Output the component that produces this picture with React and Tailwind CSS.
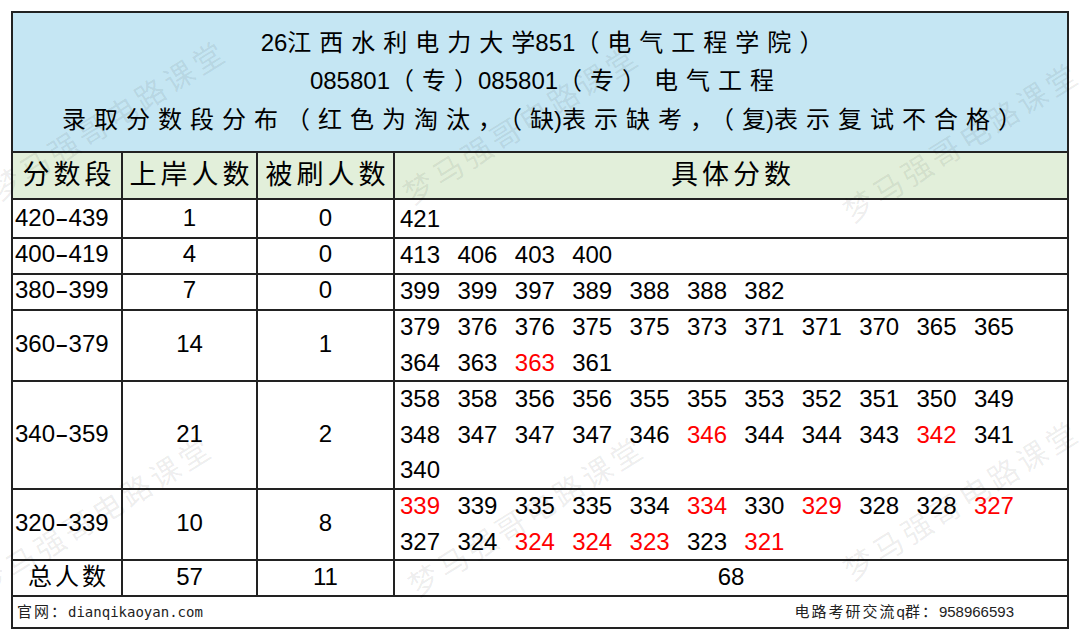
import React from "react";

const rows = [
  { range: ["420", "439"], a: "1", b: "0", h: "h-[36px]", lines: [["421"]] },
  { range: ["400", "419"], a: "4", b: "0", h: "h-[36px]", lines: [["413", "406", "403", "400"]] },
  { range: ["380", "399"], a: "7", b: "0", h: "h-[36px]", lines: [["399", "399", "397", "389", "388", "388", "382"]] },
  {
    range: ["360", "379"], a: "14", b: "1", h: "h-[72px]",
    lines: [
      ["379", "376", "376", "375", "375", "373", "371", "371", "370", "365", "365"],
      ["364", "363", "363*", "361"],
    ],
  },
  {
    range: ["340", "359"], a: "21", b: "2", h: "h-[107px]",
    lines: [
      ["358", "358", "356", "356", "355", "355", "353", "352", "351", "350", "349"],
      ["348", "347", "347", "347", "346", "346*", "344", "344", "343", "342*", "341"],
      ["340"],
    ],
  },
  {
    range: ["320", "339"], a: "10", b: "8", h: "h-[72px]",
    lines: [
      ["339*", "339", "335", "335", "334", "334*", "330", "329*", "328", "328", "327*"],
      ["327", "324", "324*", "324*", "323*", "323", "321*"],
    ],
  },
];

const marks = [
  "left-[2px] top-[176px]",
  "left-[415px] top-[180px]",
  "left-[855px] top-[198px]",
  "left-[-12px] top-[572px]",
  "left-[420px] top-[572px]",
  "left-[855px] top-[556px]",
];

function Range({ lo, hi }) {
  return (
    <span className="whitespace-nowrap">
      {lo}
      <span className="inline-block w-[13.5px] text-center scale-x-[1.7]">-</span>
      {hi}
    </span>
  );
}

function C({ children }) {
  const s = children;
  return (
    <>
      <span className="tracking-[8px]">{s.slice(0, -1)}</span>
      {s.slice(-1)}
    </>
  );
}

export default function App() {
  return (
    <div className="relative w-[1080px] h-[641px] overflow-hidden bg-white font-['Liberation_Sans','Noto_Sans_CJK_SC',sans-serif] text-black">
      <div className="ml-[11px] mt-[11px] w-[1058px] border-l-2 border-t-2 border-[#222]">
        {/* Title */}
        <div className="h-[140px] bg-[#c5e6f3] border-r-2 border-b-2 border-[#222] flex flex-col items-center justify-center text-[24px]">
          <div className="h-[38px] leading-[38px] whitespace-nowrap pl-[4px]">
            26<C>江西水利电力大学</C>851<C>（电气工程学院）</C>
          </div>
          <div className="h-[38px] leading-[38px] whitespace-nowrap pl-[4px]">
            085801<C>（专）</C>085801<C>（专）电气工程</C>
          </div>
          <div className="h-[40px] leading-[40px] whitespace-nowrap pl-[4px]">
            <C>录取分数段分布（红色为淘汰，（缺</C>)<C>表示缺考，（复</C>)<C>表示复试不合格）</C>
          </div>
        </div>

        {/* Header */}
        <div className="grid grid-cols-[110px_135px_137px_674px] h-[47px] bg-[#e2efda] text-[27px] tracking-[4px]">
          <div className="border-r-2 border-b-2 border-[#222] flex items-center justify-center pl-[4px]">分数段</div>
          <div className="border-r-2 border-b-2 border-[#222] flex items-center justify-center pl-[4px]">上岸人数</div>
          <div className="border-r-2 border-b-2 border-[#222] flex items-center justify-center pl-[4px]">被刷人数</div>
          <div className="border-r-2 border-b-2 border-[#222] flex items-center justify-center pl-[4px]">具体分数</div>
        </div>

        {/* Data rows */}
        {rows.map((r, i) => (
          <div key={i} className={"grid grid-cols-[110px_135px_137px_674px] text-[24px] " + r.h}>
            <div className="border-r-2 border-b-2 border-[#222] flex items-center pl-[2px]">
              <Range lo={r.range[0]} hi={r.range[1]} />
            </div>
            <div className="border-r-2 border-b-2 border-[#222] flex items-center justify-center">{r.a}</div>
            <div className="border-r-2 border-b-2 border-[#222] flex items-center justify-center">{r.b}</div>
            <div className="border-r-2 border-b-2 border-[#222] flex flex-col justify-center pl-[5px] pt-[1px]">
              {r.lines.map((line, j) => (
                <div key={j} className="leading-[35.5px] whitespace-nowrap">
                  {line.map((t, k) => {
                    const red = t.endsWith("*");
                    return (
                      <span key={k} className={red ? "inline-block w-[57.4px] text-[#ff0000]" : "inline-block w-[57.4px]"}>
                        {red ? t.slice(0, -1) : t}
                      </span>
                    );
                  })}
                </div>
              ))}
            </div>
          </div>
        ))}

        {/* Total */}
        <div className="grid grid-cols-[110px_135px_137px_674px] h-[35px] text-[24px]">
          <div className="border-r-2 border-b-2 border-[#222] flex items-center justify-center tracking-[3px] pl-[3px]">总人数</div>
          <div className="border-r-2 border-b-2 border-[#222] flex items-center justify-center">57</div>
          <div className="border-r-2 border-b-2 border-[#222] flex items-center justify-center">11</div>
          <div className="border-r-2 border-b-2 border-[#222] flex items-center justify-center">68</div>
        </div>

        {/* Footer */}
        <div className="h-[35px] border-r-2 border-b-2 border-[#222] flex items-center justify-between pt-[3px] pl-[4px] pr-[53px] text-[15px] text-[#222]">
          <span className="whitespace-nowrap">
            <span className="tracking-[2px]">官网：</span>
            <span className="font-['DejaVu_Sans_Mono',monospace] text-[14px]">dianqikaoyan.com</span>
          </span>
          <span className="whitespace-nowrap">
            <span className="tracking-[2px]">电路考研交流</span>q<span className="tracking-[2px]">群：</span>958966593
          </span>
        </div>
      </div>

      {/* Watermarks */}
      {marks.map((m, i) => (
        <span
          key={i}
          aria-hidden="true"
          className={"pointer-events-none select-none absolute origin-bottom-left -rotate-[32deg] whitespace-nowrap text-[30px] leading-[30px] tracking-[4px] text-black/[0.08] " + m}
        >
          梦马强哥电路课堂
        </span>
      ))}
    </div>
  );
}
